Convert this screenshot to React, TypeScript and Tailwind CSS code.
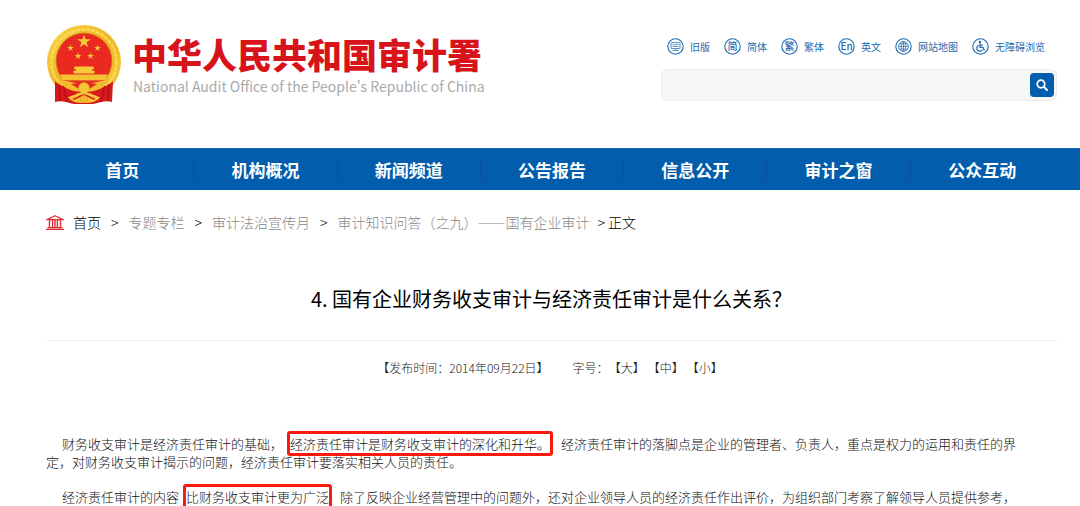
import type { ReactNode } from "react";

type TopLink = {
  label: string;
  icon: ReactNode;
};

const topLinks: TopLink[] = [
  { label: "旧版", icon: <ScreenIcon /> },
  { label: "简体", icon: <GlyphIcon text="简" /> },
  { label: "繁体", icon: <GlyphIcon text="繁" /> },
  { label: "英文", icon: <GlyphIcon text="En" /> },
  { label: "网站地图", icon: <GlobeIcon /> },
  { label: "无障碍浏览", icon: <AccessIcon /> },
];

const navItems = ["首页", "机构概况", "新闻频道", "公告报告", "信息公开", "审计之窗", "公众互动"];

const crumbs = ["专题专栏", "审计法治宣传月", "审计知识问答（之九）——国有企业审计"];

const fontSizes = ["大", "中", "小"];

export default function App() {
  return (
    <div
      lang="zh-CN"
      className="overflow-hidden bg-white font-['Noto_Sans_CJK_SC',sans-serif] text-[#333]"
    >
      <Header />
      <MainNav />
      <main className="pr-[23px] pb-2 pl-[46px] font-light">
        <Breadcrumb />
        <Article />
      </main>
    </div>
  );
}

function Header() {
  return (
    <header className="flex h-[148px] items-start justify-between pr-[23px] pl-[46px]">
      <a href="#" className="flex gap-[10px] pt-6">
        <Emblem />
        <span className="flex flex-col pt-[10px]">
          <span className="text-[35px] leading-10 font-black text-[#d7141a]">中华人民共和国审计署</span>
          <span className="pl-px text-sm leading-6 text-[#aaa]">
            National Audit Office of the People's Republic of China
          </span>
        </span>
      </a>
      <div className="w-[396px] pt-[38px]">
        <ul className="flex gap-[14px] pl-[6px]">
          {topLinks.map((link) => (
            <li key={link.label}>
              <a href="#" className="flex items-center gap-[6px] text-[10px] leading-[17px] text-[#1f6bb0]">
                {link.icon}
                {link.label}
              </a>
            </li>
          ))}
        </ul>
        <form
          className="mt-[14px] flex h-8 items-center rounded-md border border-[#eee] bg-[#f6f6f6] pr-[2px]"
          onSubmit={(event) => event.preventDefault()}
        >
          <input type="text" aria-label="搜索" className="h-full min-w-0 flex-1 px-3 text-sm outline-none" />
          <button
            type="submit"
            aria-label="搜索"
            className="flex size-6 items-center justify-center rounded bg-[#035dad]"
          >
            <svg viewBox="0 0 12 12" className="size-3" fill="none" stroke="#fff" strokeLinecap="round">
              <circle cx="5" cy="5" r="3.8" strokeWidth="1.7" />
              <path d="M8 8l3 3" strokeWidth="2" />
            </svg>
          </button>
        </form>
      </div>
    </header>
  );
}

function MainNav() {
  return (
    <nav className="border-t border-[#1a6bb5] bg-[#035dad] pr-[26px] pl-[51px]">
      <ul className="grid grid-cols-7 py-2">
        {navItems.map((item) => (
          <li key={item} className="border-r border-[#0b51a0] last:border-r-0">
            <a href="#" className="block text-center text-[17px] leading-[25px] font-bold text-white">
              {item}
            </a>
          </li>
        ))}
      </ul>
    </nav>
  );
}

function Breadcrumb() {
  return (
    <nav aria-label="面包屑" className="flex items-center pt-[22px] text-sm leading-5">
      <BuildingIcon />
      <a href="#" className="ml-[9px] text-black">
        首页
      </a>
      {crumbs.map((crumb) => (
        <span key={crumb} className="flex">
          <span className="mx-[10px] text-black">&gt;</span>
          <a href="#" className="text-[#888]">
            {crumb}
          </a>
        </span>
      ))}
      <span className="ml-2 text-black">&gt; 正文</span>
    </nav>
  );
}

function Article() {
  return (
    <article>
      <h1 className="border-b border-[#eee] pt-[51px] pb-[25px] text-center text-xl leading-8 font-normal text-black">
        4. 国有企业财务收支审计与经济责任审计是什么关系？
      </h1>
      <div className="flex justify-center pt-[17px] text-xs leading-5 text-[#222]">
        <span>【发布时间：2014年09月22日】</span>
        <span className="ml-6">字号：</span>
        {fontSizes.map((size) => (
          <button key={size} type="button" className="mr-[3px]">
            【{size}】
          </button>
        ))}
      </div>
      <div className="pt-[57px] pr-8 text-[13px] leading-[18px] text-[#111]">
        <p className="indent-4">
          财务收支审计是经济责任审计的基础，
          <Marked>经济责任审计是财务收支审计的深化和升华。</Marked>
          经济责任审计的落脚点是企业的管理者、负责人，重点是权力的运用和责任的界定，对财务收支审计揭示的问题，经济责任审计要落实相关人员的责任。
        </p>
        <p className="pt-[17px] indent-4">
          经济责任审计的内容
          <Marked>比财务收支审计更为广泛</Marked>
          除了反映企业经营管理中的问题外，还对企业领导人员的经济责任作出评价，为组织部门考察了解领导人员提供参考，
        </p>
      </div>
    </article>
  );
}

function Marked({ children }: { children: ReactNode }) {
  return (
    <mark className="mr-2 ml-1 rounded-[3px] border-3 border-[#fb1a0d] bg-transparent whitespace-nowrap text-inherit">
      {children}
    </mark>
  );
}

function IconRing({ children }: { children: ReactNode }) {
  return (
    <svg viewBox="0 0 17 17" className="size-[17px]" fill="none" stroke="#1f6bb0" aria-hidden="true">
      <circle cx="8.5" cy="8.5" r="7.7" strokeWidth="1.1" />
      {children}
    </svg>
  );
}

function GlyphIcon({ text }: { text: string }) {
  return (
    <IconRing>
      <text
        x="8.5"
        y="12"
        textAnchor="middle"
        stroke="none"
        fill="#1f6bb0"
        className="text-[10px] font-medium"
      >
        {text}
      </text>
    </IconRing>
  );
}

function ScreenIcon() {
  return (
    <IconRing>
      <rect x="4" y="4.6" width="9" height="6" rx="0.6" strokeWidth="0.8" />
      <path d="M5.5 6.7h6M5.5 8.5h6M8.5 10.6v1.6M5.5 12.5h6" strokeWidth="0.7" />
    </IconRing>
  );
}

function GlobeIcon() {
  return (
    <IconRing>
      <circle cx="8.5" cy="8.5" r="4.9" strokeWidth="0.8" />
      <ellipse cx="8.5" cy="8.5" rx="2.2" ry="4.9" strokeWidth="0.7" />
      <path d="M8.5 3.6v9.8M3.6 8.5h9.8M4.4 6h8.2M4.4 11h8.2" strokeWidth="0.7" />
    </IconRing>
  );
}

function AccessIcon() {
  return (
    <IconRing>
      <circle cx="8" cy="4" r="1.2" fill="#1f6bb0" stroke="none" />
      <path d="M8 5.2v4.2h3l1.4 3M8 7.2h2.8M6.6 7.4a3 3 0 1 0 3.9 4" strokeWidth="1.2" />
    </IconRing>
  );
}

function BuildingIcon() {
  return (
    <svg viewBox="0 0 18 15" className="h-[15px] w-[18px]" fill="none" stroke="#dd3035" aria-hidden="true">
      <path d="M1 4.6C3 3.4 6 2.6 9 0.8c3 1.8 6 2.6 8 3.8z" strokeWidth="1.3" />
      <path d="M3.5 5v8M6.6 5v8M9 5v8M11.4 5v8M14.5 5v8" strokeWidth="1.4" />
      <path d="M1.5 12.6h15M0 14.3h18" strokeWidth="1.2" />
    </svg>
  );
}

function Star({ x, y, r }: { x: number; y: number; r: number }) {
  return (
    <path
      transform={`translate(${x} ${y}) scale(${r})`}
      d="M0-1 .23-.31.95-.31.36.12.59.81 0 .38-.59.81-.36.12-.95-.31-.23-.31z"
      fill="#f8c93a"
    />
  );
}

function Emblem() {
  return (
    <svg viewBox="0 0 76 80" className="h-20 w-[76px]" aria-hidden="true">
      <defs>
        <linearGradient id="gold" x1="0" y1="0" x2="1" y2="1">
          <stop offset="0" stopColor="#fbd64a" />
          <stop offset="0.5" stopColor="#efb526" />
          <stop offset="1" stopColor="#f8cf3f" />
        </linearGradient>
      </defs>
      <circle cx="38" cy="38" r="37" fill="url(#gold)" />
      <circle cx="38" cy="38" r="32.5" fill="none" stroke="#fbdc5c" strokeWidth="2" strokeDasharray="4 1" />
      <circle cx="38" cy="37" r="28" fill="#ea2a20" stroke="#c98a14" strokeWidth="0.8" />
      <Star x={38} y={17.5} r={7} />
      <Star x={24.5} y={24} r={3.6} />
      <Star x={51.5} y={24} r={3.6} />
      <Star x={32} y={32} r={3.6} />
      <Star x={44.5} y={32} r={3.6} />
      <path d="M29 42.5h18l1.5 2.5h-21zM30 45h16v2H30zM27.5 46.5h21v3h-21z" fill="#f8c93a" />
      <path d="M14 50.5h48l-3 6H17z" fill="#f6c133" />
      <path d="M17 57.5h42" stroke="#e0301f" strokeWidth="1.4" />
      <path d="M9 57c5 5 12 7 18 7h22c6 0 13-2 18-7l-1 21c-7-2-13 1-19 2H28c-6-1-12-4-19-2z" fill="#d8191b" />
      <path d="M17 60l4 18M13 60l1 17M59 60l-4 18M63 60l-1 17" stroke="#a80f13" strokeWidth="1" />
      <path d="M12 56c8 1 18 2 26 7 8-5 18-6 26-7-5 8-13 12-26 12S17 64 12 56z" fill="#f3bb2d" />
      <path d="M25 60c4-1 9-1 13 0 4-1 9-1 13 0l-8 5H33z" fill="#e52a20" />
      <circle cx="38" cy="64" r="5.4" fill="#f6c636" stroke="#e3a322" strokeDasharray="2 1" />
      <path d="M22 73c5-1 10-5 16-5s11 4 16 5c-3 5-9 6-16 6s-13-1-16-6z" fill="#f5c538" />
      <path d="M27 75c4 0 7-4 11-4s7 4 11 4" fill="none" stroke="#d92019" strokeWidth="1.6" />
      <circle cx="38" cy="75" r="3.6" fill="#f3b82b" stroke="#dd9a1c" strokeWidth="0.6" />
    </svg>
  );
}
